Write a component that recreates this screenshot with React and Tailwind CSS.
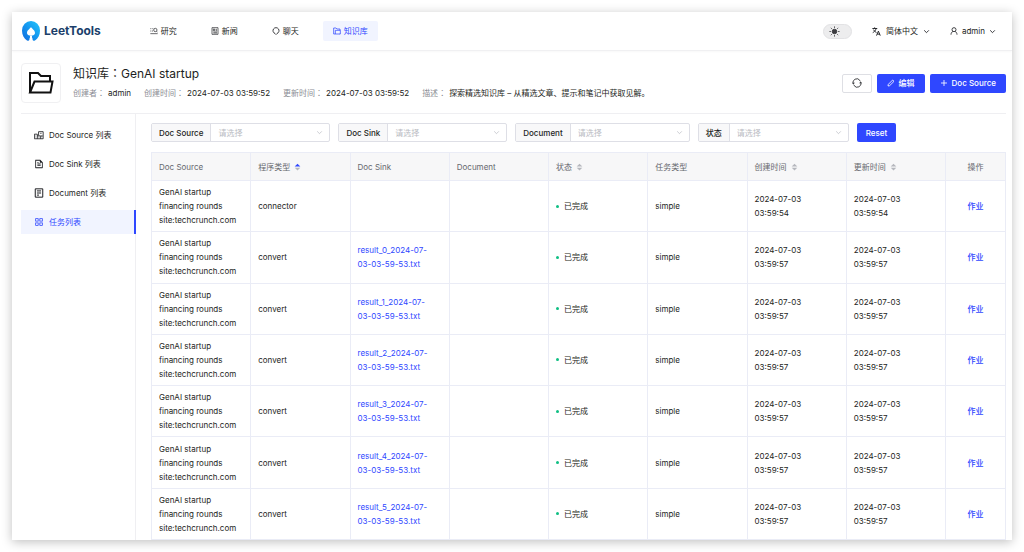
import { RiFileTextLine, RiFunctionLine } from 'react-icons/ri';

const navItems = [
    { key: 'research', label: '研究', icon: 'research' },
    { key: 'news', label: '新闻', icon: 'news' },
    { key: 'chat', label: '聊天', icon: 'chat' },
    { key: 'kb', label: '知识库', icon: 'folder', active: true },
];

const sideItems = [
    { key: 'source', label: 'Doc Source 列表' },
    { key: 'sink', label: 'Doc Sink 列表' },
    { key: 'document', label: 'Document 列表' },
    { key: 'tasks', label: '任务列表', active: true },
];

const filters = [
    { id: 'doc-source', label: 'Doc Source' },
    { id: 'doc-sink', label: 'Doc Sink' },
    { id: 'document', label: 'Document' },
    { id: 'status', label: '状态' },
];

const columns = [
    { title: 'Doc Source' },
    { title: '程序类型', sort: 'asc' },
    { title: 'Doc Sink' },
    { title: 'Document' },
    { title: '状态', sort: 'none' },
    { title: '任务类型' },
    { title: '创建时间', sort: 'none' },
    { title: '更新时间', sort: 'none' },
];

const convertRows = [0, 1, 2, 3, 4, 5].map((n) => ({
    id: n + 1,
    type: 'convert',
    sink: `result_${n}_2024-07-03-03-59-53.txt`,
    time: '03:59:57',
}));

const rows = [{ id: 0, type: 'connector', sink: '', time: '03:59:54' }, ...convertRows];

const meta = [
    { label: '创建者', value: 'admin' },
    { label: '创建时间', value: '2024-07-03 03:59:52' },
    { label: '更新时间', value: '2024-07-03 03:59:52' },
    { label: '描述', value: '探索精选知识库 – 从精选文章、提示和笔记中获取见解。' },
];

const Line = ({ className, children, width = 2 }) => (
    <svg
        viewBox="0 0 24 24"
        className={className}
        fill="none"
        stroke="currentColor"
        strokeWidth={width}
        strokeLinejoin="round"
        aria-hidden="true"
    >
        {children}
    </svg>
);

const NavIcon = ({ name }) => {
    if (name === 'research') {
        return (
            <Line className="size-2 shrink-0">
                <path d="M1 5h3M7 5h3M1 12h3M6 12h3M1 20h22M20 13l3 3" />
                <circle cx="16" cy="9" r="5" />
            </Line>
        );
    }
    if (name === 'news') {
        return (
            <Line className="size-2 shrink-0">
                <path d="M3 2h18v20H3zM7 6h4v5H7zM14 7h4M14 11h4M7 15h11M7 18h11" />
            </Line>
        );
    }
    if (name === 'chat') {
        return (
            <Line className="size-2 shrink-0" width={2.5}>
                <path d="M9 19.500a9 9 0 1 1 6 0l-3 3z" />
            </Line>
        );
    }
    return (
        <Line className="size-2 shrink-0" width={2.2}>
            <path d="M19 21H2V3h7l3 3h9v4M7 21V10h15v11h-4" />
        </Line>
    );
};

const SideIcon = ({ name }) => {
    if (name === 'sink') return <RiFileTextLine className="size-[10px] shrink-0" />;
    if (name === 'tasks') return <RiFunctionLine className="size-[10px] shrink-0" />;
    if (name === 'document') {
        return (
            <Line className="size-[10px] shrink-0" width={2.4}>
                <path d="M3 2h18v20H3zM7 7h10M7 12h10M7 17h5" />
            </Line>
        );
    }
    return (
        <Line className="size-[10px] shrink-0">
            <path d="M1 21V10h7v11M11 13V4h11v17H1M8 14h8v7M4 14h1M4 17h1M15 8h3M19 12v5M11 17h2" />
        </Line>
    );
};

const Chevron = ({ className, width = 3 }) => (
    <Line className={className} width={width}>
        <path d="M4 8l8 8 8-8" />
    </Line>
);

// the two triangles beside a sortable column title
const Sorter = ({ order }) => (
    <svg viewBox="0 0 8 10" className="h-2 w-[7px]" aria-hidden="true">
        <path d="M4 1l3.500 3.500h-7z" className={order === 'asc' ? 'fill-[#2f47ff]' : 'fill-[#b5b7bd]'} />
        <path d="M4 9.500L.5 6h7z" className="fill-[#b5b7bd]" />
    </svg>
);

const Logo = () => (
    <a href="#" className="flex items-center gap-1">
        <svg viewBox="0 0 36 40" className="h-5 w-[18px]" aria-hidden="true">
            <defs>
                <linearGradient id="logo" x1="1" y1="0" x2="0" y2="1">
                    <stop offset="0" stopColor="#22c8fb" />
                    <stop offset="0.5" stopColor="#1598f0" />
                    <stop offset="1" stopColor="#1169dd" />
                </linearGradient>
            </defs>
            <path
                fill="url(#logo)"
                d="M18 0a18 19 0 0 1 18 19c0 9-4 16-10 20q-4 2-5-2l-1-4h-4l-1 4q-1 4-5 2C4 35 0 28 0 19A18 19 0 0 1 18 0z"
            />
            <path fill="#fff" d="M18 12c2 4 8 6 8 12 0 3-3 5-5 5h-6c-2 0-5-2-5-5 0-6 6-8 8-12z" />
            <path fill="#fff" d="M16 29h4v4l1 4q-3-3-6 0l1-4z" />
        </svg>
        <span className="text-[12px] font-bold text-[#1c3f6b]">LeetTools</span>
    </a>
);

const Header = () => (
    <header className="flex h-[39px] shrink-0 items-center border-b border-[#f0f0f2] pr-4 pl-[10px] shadow-[0_1px_2px_rgba(0,0,0,0.03)]">
        <Logo />
        <nav className="ml-[39px] flex gap-[14px]">
            {navItems.map((item) => (
                <a
                    key={item.key}
                    href="#"
                    className={
                        item.active
                            ? 'flex h-5 items-center gap-[3px] rounded-xs bg-[#f1f4ff] px-[10px] text-[#2f47ff]'
                            : 'flex h-5 items-center gap-[3px] rounded-xs px-[10px]'
                    }
                >
                    <NavIcon name={item.icon} />
                    {item.label}
                </a>
            ))}
        </nav>
        <div className="ml-auto flex items-center gap-5">
            <button
                type="button"
                role="switch"
                aria-checked="false"
                aria-label="Theme"
                className="flex h-[15px] w-[29px] items-center rounded-full border border-[#e2e2e4] bg-[#ededee] pl-[5px] text-[#3c3c40]"
            >
                <Line className="size-[11px]" width={2}>
                    <circle cx="12" cy="12" r="5" fill="currentColor" />
                    <path d="M12 1v3M12 20v3M1 12h3M20 12h3M4 4l2 2M18 18l2 2M4 20l2-2M18 6l2-2" />
                </Line>
            </button>
            <button type="button" className="flex items-center gap-[5px]">
                <Line className="size-[9px]" width={2.5}>
                    <path d="M1 4h13M7 1v3M11 4c-1 5-5 9-9 11M4 7c2 4 5 6 8 8M12 23l5-12 5 12M14 19h7" />
                </Line>
                <span>简体中文</span>
                <Chevron className="size-[7px]" />
            </button>
            <button type="button" className="flex items-center gap-1">
                <Line className="size-2" width={2.5}>
                    <circle cx="12" cy="8" r="6" />
                    <path d="M3 23c0-5 3-9 6-9.500M21 23c0-5-3-9-6-9.500" />
                </Line>
                <span>admin</span>
                <Chevron className="size-[7px]" />
            </button>
        </div>
    </header>
);

// a full-width colon that sits in the middle of its square
const Colon = () => <span className="font-['Noto_Sans_CJK_TC',sans-serif]">：</span>;

const PageTitle = () => (
    <section className="mr-[6px] ml-[9px] flex h-[63px] shrink-0 items-center border-b border-[#efeff2] pt-[2px]">
        <div className="flex size-10 items-center justify-center rounded-sm border border-[#f0f0f2]">
            <svg viewBox="0 0 26 24" className="h-6 w-[26px]" fill="none" stroke="#111" strokeWidth="2" aria-hidden="true">
                <path d="M2 21V2h8l3 3h9v5" />
                <path d="M2 21.500L6.500 10.500H24.500L22.500 21.500z" />
            </svg>
        </div>
        <div className="ml-3 pb-[2px]">
            <h1 className="text-[12px] leading-4">
                知识库
                <Colon />
                GenAI startup
            </h1>
            <dl className="mt-1 flex gap-[13px] leading-[14px]">
                {meta.map((item) => (
                    <div key={item.label} className="flex gap-[3px]">
                        <dt className="text-[#8b8d94]">
                            {item.label}
                            <Colon />
                        </dt>
                        <dd>{item.value}</dd>
                    </div>
                ))}
            </dl>
        </div>
        <div className="ml-auto flex gap-[5px] font-medium">
            <button
                type="button"
                aria-label="Refresh"
                className="flex h-[19px] w-[30px] items-center justify-center rounded-xs border border-[#dedfe4]"
            >
                <Line className="size-[10px]">
                    <path d="M3 14a9 9 0 0 1 16-8l1 2M21 10a9 9 0 0 1-16 8l-1-2M1 11l2 3 3-2M23 13l-2-3-3 2" />
                </Line>
            </button>
            <button type="button" className="flex h-[19px] items-center gap-1 rounded-xs bg-[#2f47ff] px-[10px] text-white">
                <Line className="size-2" width={2.5}>
                    <path d="M3 21l1-5L17 3l4 4L8 20z" />
                </Line>
                编辑
            </button>
            <button type="button" className="flex h-[19px] items-center gap-1 rounded-xs bg-[#2f47ff] px-[10px] text-white">
                <Line className="size-2" width={2.5}>
                    <path d="M12 3v18M3 12h18" />
                </Line>
                Doc Source
            </button>
        </div>
    </section>
);

const Sidebar = () => (
    <aside className="flex w-[115px] shrink-0 flex-col gap-[5px] border-r border-[#efeff2] pt-[9px]">
        {sideItems.map((item) => (
            <a
                key={item.key}
                href="#"
                className={
                    item.active
                        ? '-mr-px flex h-6 items-center gap-[5px] border-r-2 border-[#2f47ff] bg-[#f1f4ff] pl-[13px] text-[#2f47ff]'
                        : 'flex h-6 items-center gap-[5px] pl-[13px]'
                }
            >
                <SideIcon name={item.key} />
                {item.label}
            </a>
        ))}
    </aside>
);

const FilterBar = () => (
    <form className="flex h-[19px] gap-2">
        {filters.map((filter) => (
            <div key={filter.id} className="flex rounded-xs border border-[#dedfe6]">
                <label htmlFor={filter.id} className="flex items-center bg-[#f8f8f9] px-[7px] font-medium">
                    {filter.label}
                </label>
                <div className="relative border-l border-[#dedfe6]">
                    <select
                        id={filter.id}
                        defaultValue=""
                        className="block h-full w-[118px] appearance-none px-[7px] text-[#b9bbc2] outline-none"
                    >
                        <option value="">请选择</option>
                    </select>
                    <Chevron
                        className="pointer-events-none absolute top-[5px] right-[6px] size-[7px] text-[#b9bbc2]"
                        width={2.5}
                    />
                </div>
            </div>
        ))}
        <button type="button" className="rounded-xs bg-[#2f47ff] px-[9px] font-medium text-white">
            Reset
        </button>
    </form>
);

const cell = 'border border-[#eaecf6] py-1 pl-[7px]';

const TaskTable = () => (
    <table className="mt-[10px] w-full flex-1 table-fixed border-collapse leading-[14px]">
        <thead>
            <tr className="h-7 bg-[#f7f7f8] text-left text-[#66686e]">
                {columns.map((column) => (
                    <th key={column.title} className={`${cell} font-normal`}>
                        <span className="flex items-center gap-1">
                            {column.title}
                            {column.sort && <Sorter order={column.sort} />}
                        </span>
                    </th>
                ))}
                <th className={`${cell} w-[60px] pr-[7px] text-center font-normal`}>操作</th>
            </tr>
        </thead>
        <tbody>
            {rows.map((row) => (
                <tr key={row.id}>
                    <td className={`${cell} pr-[7px]`}>GenAI startup financing rounds site:techcrunch.com</td>
                    <td className={cell}>{row.type}</td>
                    <td className={`${cell} pr-4 text-[#2f47ff]`}>{row.sink && <a href="#">{row.sink}</a>}</td>
                    <td className={cell} />
                    <td className={cell}>
                        <span className="flex items-center gap-[5px]">
                            <i className="size-[3px] rounded-full bg-[#0fbf83]" />
                            已完成
                        </span>
                    </td>
                    <td className={cell}>simple</td>
                    <td className={`${cell} pr-8`}>2024-07-03 {row.time}</td>
                    <td className={`${cell} pr-8`}>2024-07-03 {row.time}</td>
                    <td className={`${cell} pr-[7px] text-center font-medium text-[#2f47ff]`}>
                        <button type="button">作业</button>
                    </td>
                </tr>
            ))}
        </tbody>
    </table>
);

export default function App() {
    return (
        <div className="flex min-h-screen bg-white p-3 font-[Inter,'Noto_Sans_CJK_SC',sans-serif] text-[8px] text-[#1d1e22]">
            <div className="flex min-w-0 flex-1 flex-col bg-white shadow-[0_2px_10px_rgba(0,0,0,0.25)]">
                <Header />
                <PageTitle />
                <div className="mr-[6px] ml-[9px] flex flex-1">
                    <Sidebar />
                    <main className="flex min-w-0 flex-1 flex-col pt-[9px] pl-[15px]">
                        <FilterBar />
                        <TaskTable />
                    </main>
                </div>
            </div>
        </div>
    );
}
